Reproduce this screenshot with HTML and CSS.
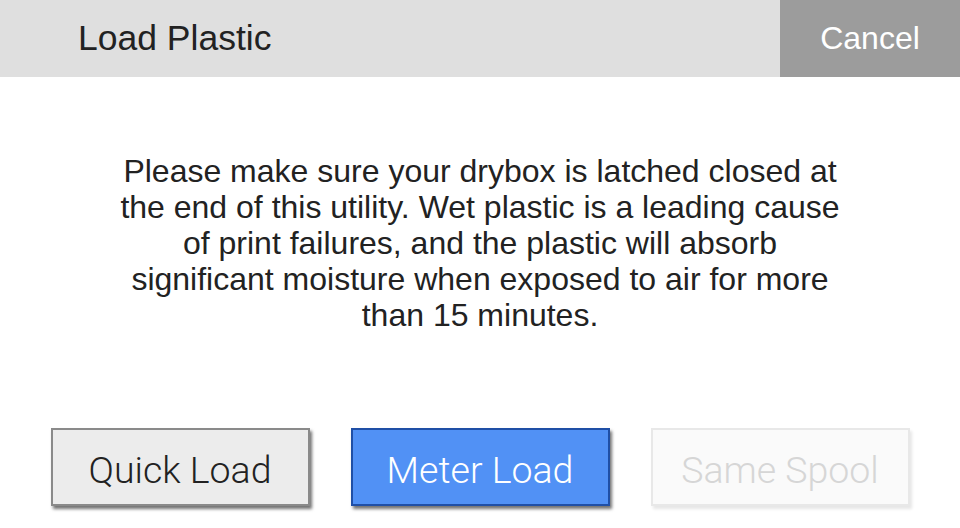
FILE: index.html
```
<!DOCTYPE html>
<html>
<head>
<meta charset="utf-8">
<link rel="stylesheet" href="styles.css">
</head>
<body>
<div class="screen">
  <header class="topbar">
    <div class="title">Load Plastic</div>
    <div class="cancel">Cancel</div>
  </header>
  <main class="content">
    <p class="message">Please make sure your drybox is latched closed at the end of this utility. Wet plastic is a leading cause of print failures, and the plastic will absorb significant moisture when exposed to air for more than 15 minutes.</p>
  </main>
  <div class="actions">
    <div class="btn btn-default">Quick Load</div>
    <div class="btn btn-primary">Meter Load</div>
    <div class="btn btn-disabled">Same Spool</div>
  </div>
</div>
</body>
</html>
```
FILE: styles.css
```
html, body {
  margin: 0;
  padding: 0;
  background: #ffffff;
}
.screen {
  width: 960px;
  height: 528px;
  overflow: hidden;
  display: flex;
  flex-direction: column;
  font-family: "Liberation Sans", Arial, sans-serif;
}
.topbar {
  height: 77px;
  background: #dfdfdf;
  display: flex;
  align-items: stretch;
}
.title {
  flex: 1;
  display: flex;
  align-items: center;
  padding-left: 78px;
  font-size: 35.5px;
  color: #222222;
}
.cancel {
  width: 180px;
  background: #9c9c9c;
  color: #ffffff;
  font-size: 32px;
  display: flex;
  align-items: center;
  justify-content: center;
}
.content {
  padding-top: 76px;
  display: flex;
  justify-content: center;
}
.message {
  margin: 0;
  width: 730px;
  text-align: center;
  font-size: 32px;
  line-height: 36px;
  color: #222222;
}
.actions {
  margin-top: auto;
  margin-bottom: 22px;
  display: flex;
  justify-content: center;
  gap: 41px;
}
.btn {
  box-sizing: border-box;
  width: 259px;
  height: 78px;
  padding-top: 5px;
  border: 2px solid;
  display: flex;
  align-items: center;
  justify-content: center;
  font-family: "Roboto", "Liberation Sans", sans-serif;
  font-weight: 300;
  font-size: 37.5px;
}
.btn-default {
  background: #ececec;
  border-color: #8a8a8a;
  color: #222222;
  box-shadow: 2px 3px 3px rgba(0, 0, 0, 0.55);
}
.btn-primary {
  background: #5191f5;
  border-color: #1f4fa6;
  color: #ffffff;
  box-shadow: 2px 3px 3px rgba(0, 0, 0, 0.55);
}
.btn-disabled {
  background: #fafafa;
  border-color: #e8e8e8;
  color: #d6d6d6;
  box-shadow: 2px 3px 3px rgba(0, 0, 0, 0.1);
}
```
